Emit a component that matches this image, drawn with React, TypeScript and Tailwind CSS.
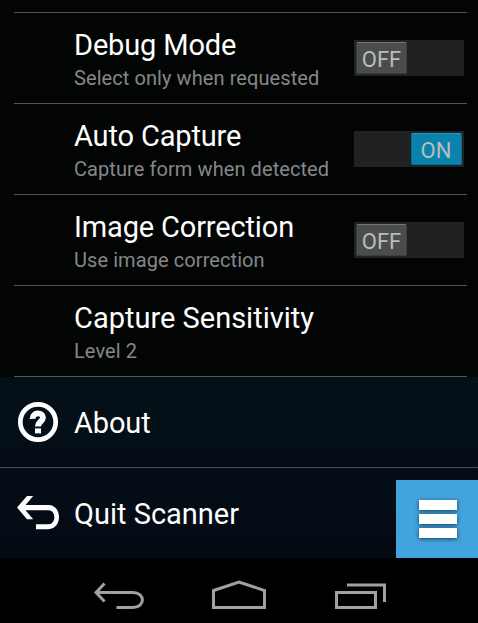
import type { ReactNode } from "react";

function Toggle({ on }: { on: boolean }) {
  return (
    <div className={`mr-[3px] flex h-9 w-[110px] bg-[#202121] p-[2px] ${on ? "justify-end" : "justify-start"}`}>
      <div
        className={`flex h-8 w-[51px] items-center justify-center rounded-[2px] border text-[22px] leading-8 text-[#b9bdbd] ${
          on ? "border-[#0c6d92] border-t-[#2a9ac0] bg-[#0983ae]" : "border-[#3c3d3d] border-t-[#757676] bg-[#4b4c4c]"
        }`}
      >
        <span className={on ? "mr-px pt-[3px]" : "pt-[3px]"}>{on ? "ON" : "OFF"}</span>
      </div>
    </div>
  );
}

type SettingProps = { title: string; detail: string; titleClass?: string; children?: ReactNode };

function Setting({ title, detail, titleClass = "tracking-[-0.15px]", children }: SettingProps) {
  return (
    <div className="ml-[14px] mr-[11px] flex h-[91px] items-center border-b border-[#545656] pl-[60px]">
      <div className="flex h-[90px] flex-1 flex-col gap-1 whitespace-nowrap pt-[15px]">
        <div className={`text-[29px] leading-[34px] text-white ${titleClass}`}>{title}</div>
        <div className="text-[20px] leading-6 tracking-[0.08px] text-[#85878a]">{detail}</div>
      </div>
      {children}
    </div>
  );
}

export default function App() {
  return (
    <div className="flex h-[623px] w-[478px] flex-col overflow-hidden bg-[#030505] font-['Roboto',sans-serif]">
      <div className="ml-[14px] mr-[11px] h-[13px] shrink-0 border-b border-[#545656]" />
      <Setting title="Debug Mode" detail="Select only when requested">
        <Toggle on={false} />
      </Setting>
      <Setting title="Auto Capture" detail="Capture form when detected">
        <Toggle on />
      </Setting>
      <Setting title="Image Correction" detail="Use image correction">
        <Toggle on={false} />
      </Setting>
      <Setting title="Capture Sensitivity" detail="Level 2" titleClass="tracking-normal" />
      <div className="flex h-[181px] shrink-0 flex-col bg-[repeating-linear-gradient(135deg,#ffffff05_0px,#ffffff05_1.4px,transparent_1.4px,transparent_2.83px),linear-gradient(#020e16,#020812)] text-[29px] text-white">
        <div className="flex h-[91px] items-center border-b border-[#475058]">
          <svg className="ml-[17px] h-[42px] w-[42px]" viewBox="0 0 42 42" fill="none" stroke="white">
            <circle cx="21" cy="21" r="17.7" strokeWidth="4.7" />
            <path d="M15.600 17.800C15.400 10.700 26 11 26 16.600C26 20.500 21 20.600 21 25.400" strokeWidth="5.8" />
            <path d="M18 27.400h6v5h-6z" fill="white" stroke="none" />
          </svg>
          <span className="ml-[15px] pt-[2px] leading-[34px] tracking-[-0.15px]">About</span>
        </div>
        <div className="flex h-[90px] items-center">
          <svg className="ml-[16px] h-[36px] w-[44px]" viewBox="0 0 44 36" fill="none" stroke="white">
            <path d="M1 12.500L11 1h6.200L9.500 10H32.500c14 0 14 24.200 0 24.200H20v-5H32.500c7.800 0 7.800-14 0-14H9.500L17.200 24.200H11z" fill="white" stroke="none" />
          </svg>
          <span className="ml-[14px] pt-[2px] leading-[34px]">Quit Scanner</span>
          <div className="ml-auto flex h-[78px] w-[82px] flex-col items-center justify-center self-end bg-[#43a3dc] pl-[2px]">
            <div className="flex flex-col gap-1 drop-shadow-[0_1px_2px_#123f60]">
              <div className="h-[10px] w-[38px] bg-white" />
              <div className="h-[10px] w-[38px] bg-white" />
              <div className="h-[10px] w-[38px] bg-white" />
            </div>
          </div>
        </div>
      </div>
      <div className="flex h-[65px] shrink-0 items-center bg-black pl-[94px]">
        <svg className="h-[37px] w-[294px]" viewBox="94 572 294 37" fill="none" stroke="#a0a1a0" strokeWidth="3">
          <path d="M104.500 583.500L96 592.500L104.500 601.500M96 592.500H133C145.500 592.500 145.500 607.500 133 607.500H116.500" />
          <path d="M213.500 590.500L239 582L264.500 590.500V607.500H213.500z" />
          <path d="M336.500 592.500H375.500V607.500H336.500zM347 585H384.500V602" />
        </svg>
      </div>
    </div>
  );
}
